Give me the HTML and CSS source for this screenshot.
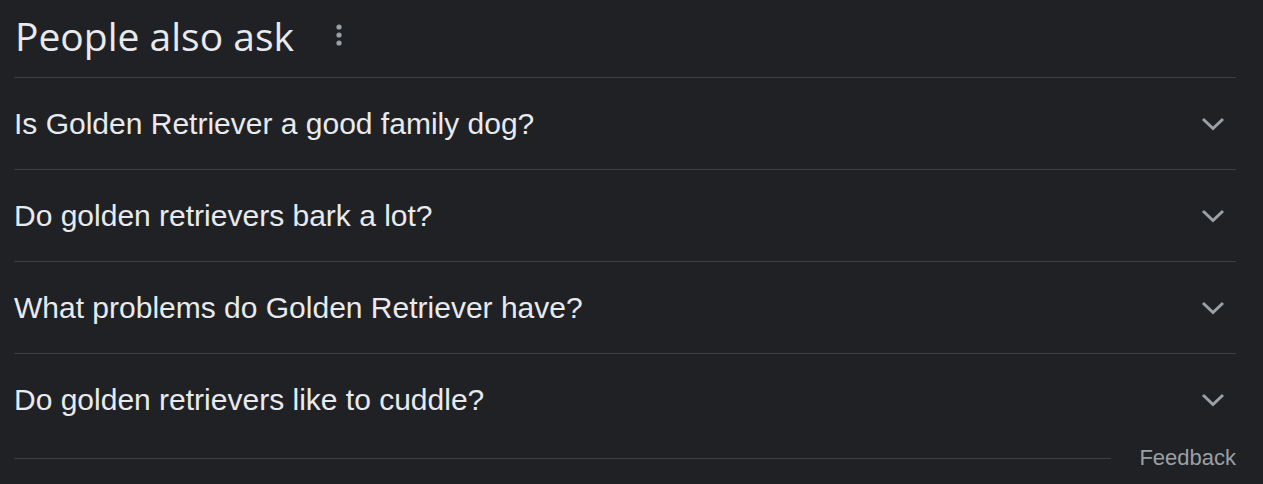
FILE: index.html
```html
<!DOCTYPE html>
<html>
<head>
<meta charset="utf-8">
<link rel="stylesheet" href="styles.css">
</head>
<body>
<div class="paa">
  <div class="header">
    <h2 class="title">People also ask</h2>
    <span class="more" aria-label="More options">
      <svg width="6" height="22" viewBox="0 0 6 22"><circle cx="3" cy="3" r="2.6" fill="#9aa0a6"/><circle cx="3" cy="11" r="2.6" fill="#9aa0a6"/><circle cx="3" cy="19" r="2.6" fill="#9aa0a6"/></svg>
    </span>
  </div>
  <div class="row"><span class="q">Is Golden Retriever a good family dog?</span><svg class="chev" width="24" height="16" viewBox="0 0 24 16"><path d="M2 3 L12 12.5 L22 3" fill="none" stroke="#9aa0a6" stroke-width="3"/></svg></div>
  <div class="row"><span class="q">Do golden retrievers bark a lot?</span><svg class="chev" width="24" height="16" viewBox="0 0 24 16"><path d="M2 3 L12 12.5 L22 3" fill="none" stroke="#9aa0a6" stroke-width="3"/></svg></div>
  <div class="row"><span class="q">What problems do Golden Retriever have?</span><svg class="chev" width="24" height="16" viewBox="0 0 24 16"><path d="M2 3 L12 12.5 L22 3" fill="none" stroke="#9aa0a6" stroke-width="3"/></svg></div>
  <div class="row"><span class="q">Do golden retrievers like to cuddle?</span><svg class="chev" width="24" height="16" viewBox="0 0 24 16"><path d="M2 3 L12 12.5 L22 3" fill="none" stroke="#9aa0a6" stroke-width="3"/></svg></div>
  <div class="footer"><span class="rule"></span><span class="feedback">Feedback</span></div>
</div>
</body>
</html>
```
FILE: styles.css
```css
html, body {
  margin: 0;
  padding: 0;
  background: #202124;
}
.paa {
  width: 1222px;
  margin-left: 14px;
}
.header {
  height: 77px;
  display: flex;
  align-items: center;
}
.title {
  margin: 0 0 6px 1px;
  font-family: "Open Sans", sans-serif;
  font-weight: 400;
  font-size: 39px;
  line-height: 44px;
  color: #e8eaed;
}
.more {
  display: flex;
  margin-left: 42px;
  margin-bottom: 8px;
}
.row {
  border-top: 1px solid #3c4043;
  height: 91px;
  display: flex;
  align-items: center;
  justify-content: space-between;
}
.q {
  font-family: "Liberation Sans", Arial, sans-serif;
  font-size: 30px;
  color: #e8eaed;
}
.chev {
  margin-right: 11px;
}
.footer {
  height: 26px;
  display: flex;
  align-items: center;
}
.rule {
  flex: 1;
  border-top: 1px solid #3c4043;
  margin-right: 28px;
}
.feedback {
  font-family: "Liberation Sans", Arial, sans-serif;
  font-size: 22px;
  color: #9aa0a6;
}
```
